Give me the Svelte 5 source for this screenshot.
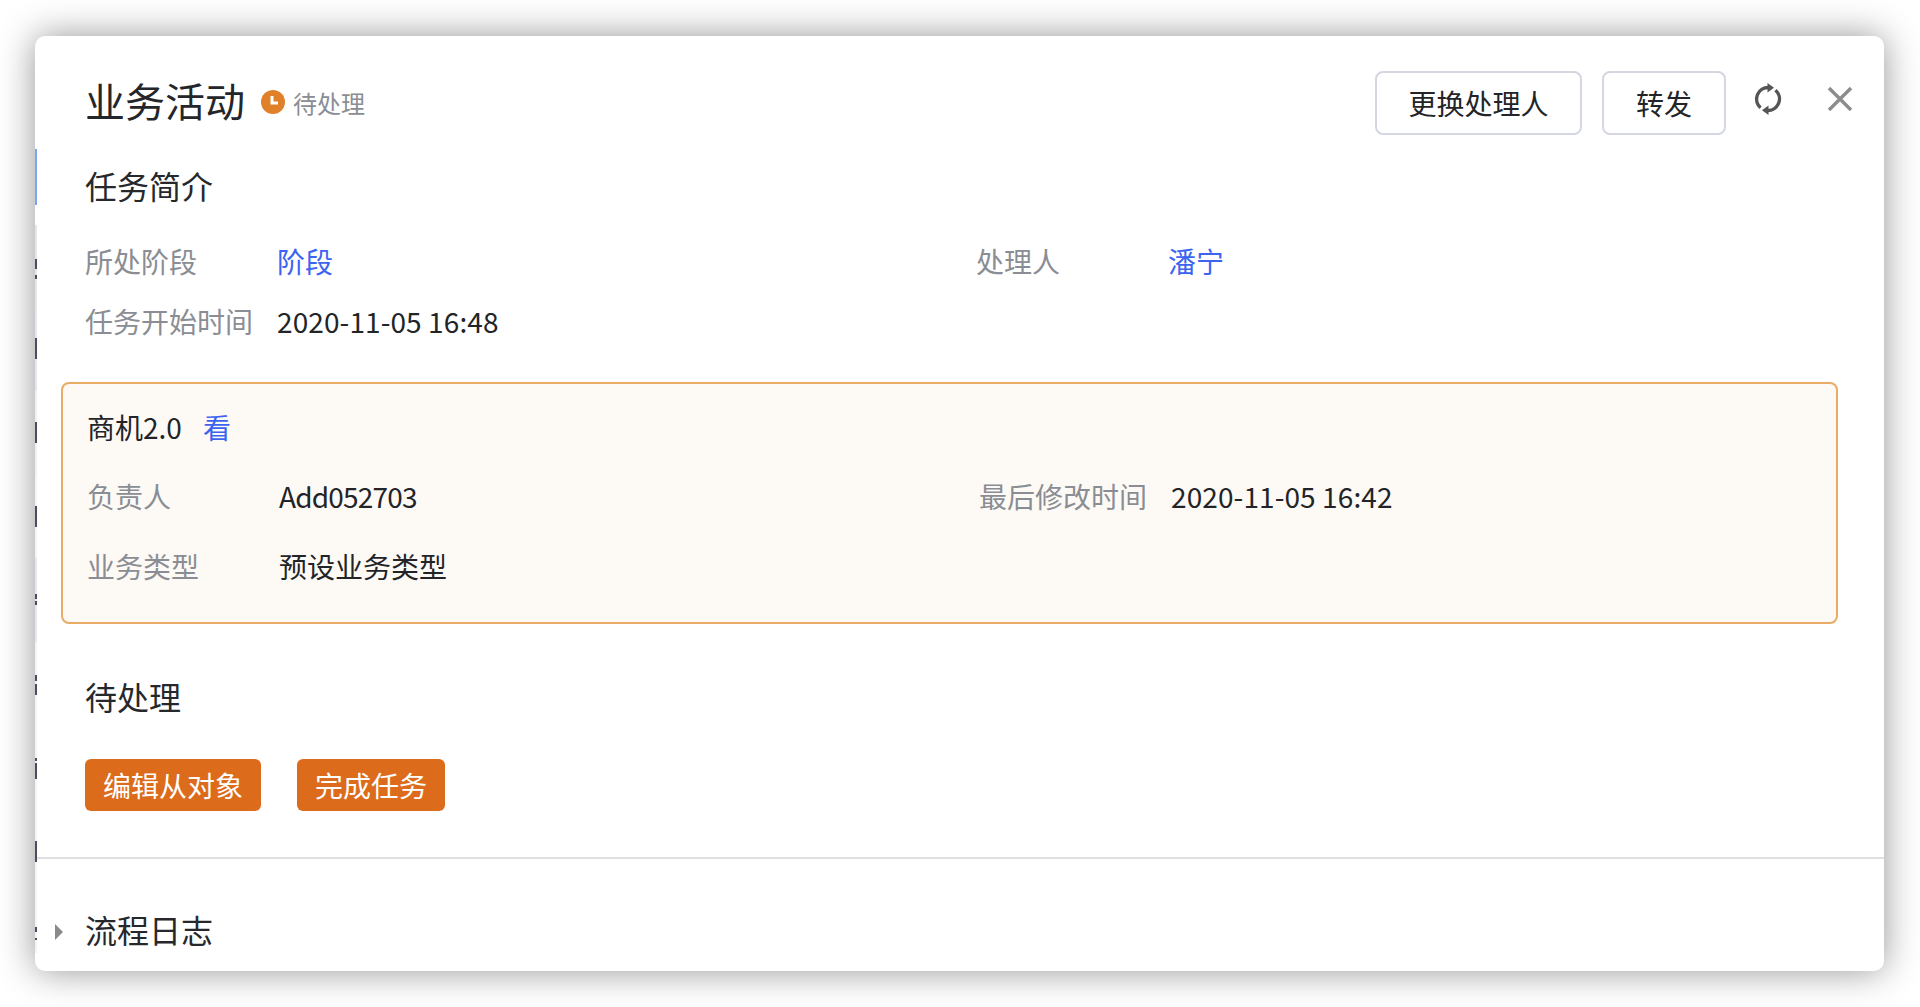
<script>
  const bands = [
    { top: 149, h: 56, c: '#7ca4f0' },
    { top: 225, h: 82, c: '#e6e6e6' },
    { top: 307, h: 84, c: '#e4e6f0' },
    { top: 391, h: 84, c: '#f1f1f3' },
    { top: 475, h: 83, c: '#f4f4f6' },
    { top: 558, h: 84, c: '#e4e6f0' },
    { top: 642, h: 83, c: '#f4f4f6' },
    { top: 725, h: 84, c: '#f4f4f6' },
    { top: 809, h: 84, c: '#f4f4f6' },
    { top: 893, h: 60, c: '#f4f4f6' }
  ];
  const marks = [
    { top: 259, h: 6 }, { top: 265, h: 4 }, { top: 275, h: 4 },
    { top: 338, h: 21 }, { top: 422, h: 21 }, { top: 506, h: 21 },
    { top: 594, h: 5 }, { top: 601, h: 4 }, { top: 675, h: 6 }, { top: 684, h: 11 },
    { top: 758, h: 3 }, { top: 763, h: 16 }, { top: 841, h: 21 },
    { top: 927, h: 5 }, { top: 938, h: 2 }
  ];
</script>

<div class="modal">
  <div class="strip" aria-hidden="true">
    {#each bands as b}
      <i style="top:{b.top - 36}px;height:{b.h}px;background:{b.c}"></i>
    {/each}
    {#each marks as m}
      <i style="top:{m.top - 36}px;height:{m.h}px;background:#4a4c60"></i>
    {/each}
  </div>

  <header class="head">
    <h1>业务活动</h1>
    <span class="status">
      <svg class="clock" viewBox="0 0 24 24" width="24" height="24">
        <circle cx="12" cy="12" r="12" fill="#e08028" />
        <path d="M11 6v7h6" fill="none" stroke="#fff" stroke-width="3" />
      </svg>
      待处理
    </span>
    <div class="actions">
      <button class="ghost wide">更换处理人</button>
      <button class="ghost narrow">转发</button>
      <svg class="refresh" viewBox="0 0 32 32" width="32" height="32">
        <g fill="none" stroke="#555" stroke-width="3.4">
          <path d="M17 4.6A11.5 11.5 0 0 0 8.6 24.8" />
          <path d="M15 27.4A11.5 11.5 0 0 0 23.4 7.2" />
        </g>
        <path d="M15.5 0l6.5 4.8-6.5 4.8z" fill="#555" />
        <path d="M16.5 32l-6.5-4.8 6.5-4.8z" fill="#555" />
      </svg>
      <svg class="close" viewBox="0 0 24 24" width="24" height="24">
        <path d="M1 1l22 22M23 1L1 23" stroke="#8c8c8c" stroke-width="3.4" fill="none" />
      </svg>
    </div>
  </header>

  <section class="info">
    <h2>任务简介</h2>
    <div class="grid">
      <div class="field"><span class="label">所处阶段</span><a class="link">阶段</a></div>
      <div class="field"><span class="label">处理人</span><a class="link">潘宁</a></div>
      <div class="field"><span class="label">任务开始时间</span><span class="num">2020-11-05 16:48</span></div>
    </div>
  </section>

  <section class="card">
    <div class="card-title">商机2.0<a class="link">看</a></div>
    <div class="grid tall">
      <div class="field"><span class="label">负责人</span><span class="code">Add052703</span></div>
      <div class="field"><span class="label">最后修改时间</span><span class="num">2020-11-05 16:42</span></div>
      <div class="field"><span class="label">业务类型</span><span>预设业务类型</span></div>
    </div>
  </section>

  <section class="todo">
    <h2>待处理</h2>
    <div class="btns">
      <button class="primary">编辑从对象</button>
      <button class="primary">完成任务</button>
    </div>
  </section>

  <footer class="foot">
    <svg class="tri" viewBox="0 0 8 16" width="8" height="16"><path d="M0 0l8 8-8 8z" fill="#8a8a8a" /></svg>
    <h2>流程日志</h2>
  </footer>
</div>

<style>
  :global(html), :global(body) {
    height: 100%;
  }
  :global(body) {
    margin: 0;
    background: #fff;
    overflow: hidden;
  }
  :global(#app) {
    height: 100%;
    display: flow-root;
  }
  .modal {
    position: relative;
    box-sizing: border-box;
    width: 1849px;
    height: 935px;
    margin: 36px 0 0 35px;
    background: #fff;
    border-radius: 10px;
    box-shadow: 0 0 36px rgba(0, 0, 0, 0.42);
    overflow: hidden;
    font-family: "Noto Sans CJK SC", "Noto Sans", sans-serif;
    font-size: 28px;
    color: #222428;
  }
  .strip {
    position: absolute;
    left: 0;
    top: 0;
    bottom: 0;
    width: 2px;
  }
  .strip i {
    position: absolute;
    left: 0;
    width: 2px;
  }
  .head {
    display: flex;
    align-items: center;
    height: 64px;
    padding: 35px 32px 0 50px;
  }
  h1 {
    margin: -6px 0 0;
    font-size: 40px;
    font-weight: 400;
    line-height: 64px;
    color: #24262a;
  }
  .status {
    display: flex;
    align-items: center;
    gap: 8px;
    margin: -2px 0 0 16px;
    font-size: 24px;
    color: #8a8d93;
  }
  .clock {
    flex: none;
  }
  .actions {
    display: flex;
    align-items: center;
    margin-left: auto;
  }
  button {
    font: inherit;
    padding: 0;
    box-sizing: border-box;
    border-radius: 6px;
    cursor: pointer;
  }
  .ghost {
    height: 64px;
    background: #fff;
    border: 2px solid #d4d6e2;
    border-radius: 8px;
    color: #222428;
  }
  .wide {
    width: 207px;
  }
  .narrow {
    width: 124px;
    margin-left: 20px;
  }
  .refresh {
    margin: 0 0 8px 26px;
  }
  .close {
    margin: 0 0 8px 44px;
  }
  h2 {
    margin: 0;
    font-size: 32px;
    font-weight: 400;
    line-height: 40px;
    color: #26282c;
  }
  .info {
    padding: 30px 0 0 50px;
  }
  .info h2 {
    margin-bottom: 26px;
  }
  .grid {
    display: grid;
    grid-template-columns: 891px 1fr;
    grid-auto-rows: 60px;
  }
  .field {
    display: flex;
    align-items: center;
  }
  .label {
    flex: none;
    width: 192px;
    color: #8a8d93;
  }
  .link {
    color: #3c64f0;
  }
  .num {
    letter-spacing: 0.1px;
  }
  .code {
    letter-spacing: -0.8px;
  }
  .card {
    box-sizing: border-box;
    height: 242px;
    margin: 31px 46px 0 26px;
    padding: 23px 24px 0;
    background: #fdfaf6;
    border: 2px solid #e8ac66;
    border-radius: 8px;
  }
  .card-title {
    display: flex;
    align-items: center;
    gap: 21px;
    height: 40px;
    margin-bottom: 14px;
  }
  .tall {
    grid-template-columns: 892px 1fr;
    grid-auto-rows: 70px;
  }
  .todo {
    padding: 52px 0 0 50px;
  }
  .btns {
    display: flex;
    gap: 36px;
    margin-top: 43px;
  }
  .primary {
    height: 52px;
    border: none;
    background: #dc6c1c;
    color: #fff;
  }
  .primary:first-child {
    width: 176px;
  }
  .primary:last-child {
    width: 148px;
  }
  .foot {
    display: flex;
    align-items: center;
    margin-top: 46px;
    padding: 50px 0 0 20px;
    border-top: 2px solid #e0e0e2;
  }
  .tri {
    margin: 6px 22px 0 0;
  }
</style>
